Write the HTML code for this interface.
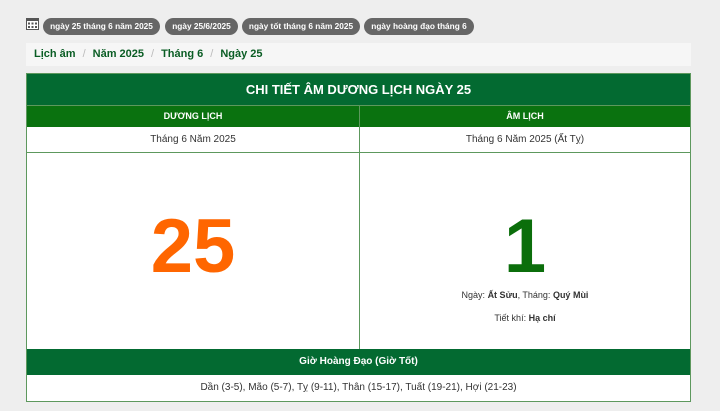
<!DOCTYPE html>
<html><head><meta charset="utf-8"><style>
*{margin:0;padding:0;box-sizing:border-box}
body{width:720px;height:411px;background:#eeeeee;font-family:"Liberation Sans",sans-serif;position:relative;overflow:hidden}
.pill{position:absolute;top:18px;height:17px;background:#666;color:#fff;border-radius:9px;font-size:8.3px;font-weight:bold;line-height:17px;text-align:center;white-space:nowrap;overflow:hidden}
.bc{position:absolute;left:26px;top:43px;width:665px;height:23px;background:#f6f6f6;font-size:11px;font-weight:bold;color:#0a5d24;line-height:23px;padding-left:8px}
.bc span.s{color:#bbb;font-weight:normal;margin:0 7px}
.t{position:absolute;left:26px;top:73px;width:665px;height:329px;border:1px solid #5d985d;background:#fff}
.r{position:absolute;left:0;width:663px}
.c{position:absolute;text-align:center}
</style></head><body>
<svg style="position:absolute;left:26px;top:17px" width="13" height="13" viewBox="0 0 13 13"><rect x="0.5" y="1.5" width="12" height="11" fill="#fff" stroke="#555"/><rect x="0.5" y="1.5" width="12" height="2.5" fill="#555"/><g fill="#555"><rect x="2" y="5.5" width="2" height="2"/><rect x="5.5" y="5.5" width="2" height="2"/><rect x="9" y="5.5" width="2" height="2"/><rect x="2" y="9" width="2" height="2"/><rect x="5.5" y="9" width="2" height="2"/><rect x="9" y="9" width="2" height="2"/></g></svg>
<div class="pill" style="left:43px;width:117px">ngày 25 tháng 6 năm 2025</div>
<div class="pill" style="left:165px;width:73px">ngày 25/6/2025</div>
<div class="pill" style="left:242px;width:118px">ngày tốt tháng 6 năm 2025</div>
<div class="pill" style="left:364px;width:110px">ngày hoàng đạo tháng 6</div>
<div class="bc">Lịch âm<span class="s">/</span>Năm 2025<span class="s">/</span>Tháng 6<span class="s">/</span>Ngày 25</div>
<div class="t">
<div class="r" style="top:0;height:31px;background:#036a31;color:#fff;font-weight:bold;font-size:13px;line-height:31px;text-align:center">CHI TIẾT ÂM DƯƠNG LỊCH NGÀY 25</div>
<div class="r" style="top:31px;height:22px;background:#0a720f;border-top:1px solid #5d985d"></div>
<div class="c" style="left:0;top:32px;width:332px;line-height:21px;color:#fff;font-size:9px;font-weight:bold">DƯƠNG LỊCH</div>
<div class="c" style="left:333px;top:32px;width:330px;line-height:21px;color:#fff;font-size:9px;font-weight:bold">ÂM LỊCH</div>
<div style="position:absolute;left:332px;top:31px;width:1px;height:244px;background:#5d985d"></div>
<div class="r" style="top:78px;height:1px;background:#5d985d"></div>
<div class="c" style="left:0;top:53px;width:332px;line-height:25px;font-size:10px;color:#333">Tháng 6 Năm 2025</div>
<div class="c" style="left:333px;top:53px;width:330px;line-height:25px;font-size:10px;color:#333">Tháng 6 Năm 2025 (Ất Tỵ)</div>
<div class="c" style="left:0;top:128px;width:332px;font-size:76px;font-weight:bold;color:#ff6600;line-height:90px">25</div>
<div class="c" style="left:333px;top:128px;width:330px;font-size:76px;font-weight:bold;color:#0b6e0b;line-height:90px">1</div>
<div class="c" style="left:333px;top:216px;width:330px;font-size:9px;color:#333">Ngày: <b>Ất Sửu</b>, Tháng: <b>Quý Mùi</b></div>
<div class="c" style="left:333px;top:239px;width:330px;font-size:9px;color:#333">Tiết khí: <b>Hạ chí</b></div>
<div class="r" style="top:275px;height:26px;background:#036a31;color:#fff;font-weight:bold;font-size:10px;line-height:26px;text-align:center">Giờ Hoàng Đạo (Giờ Tốt)</div>
<div class="r" style="top:301px;height:26px;font-size:10px;line-height:26px;text-align:center;color:#333">Dần (3-5), Mão (5-7), Tỵ (9-11), Thân (15-17), Tuất (19-21), Hợi (21-23)</div>
</div>
</body></html>
